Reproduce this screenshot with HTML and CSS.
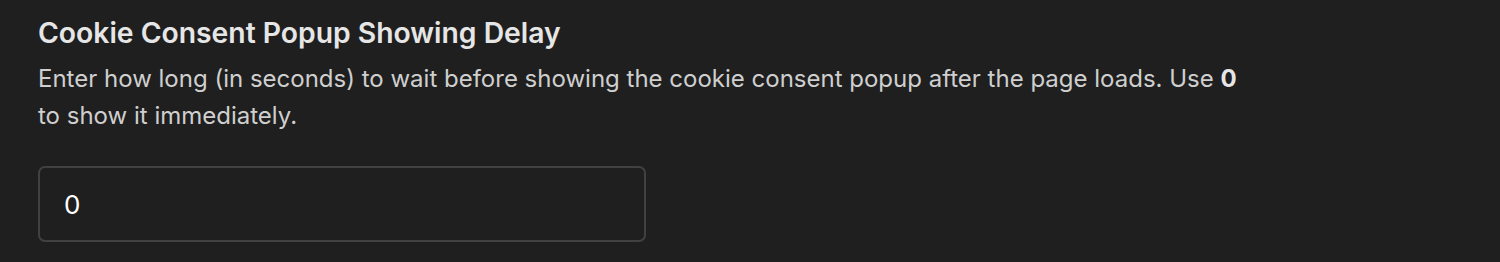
FILE: index.html
```html
<!DOCTYPE html>
<html lang="en">
<head>
    <meta charset="UTF-8">
    <meta name="viewport" content="width=device-width, initial-scale=1.0">
    <title>Cookie Consent Settings</title>
    <link rel="stylesheet" href="styles.css">
</head>
<body>
    <div class="field">
        <h2 class="field-title">Cookie Consent Popup Showing Delay</h2>
        <p class="field-desc">Enter how long (in seconds) to wait before showing the cookie consent popup after the page loads. Use <strong>0</strong> to show it immediately.</p>
        <input type="text" class="field-input" value="0">
    </div>
</body>
</html>
```

FILE: styles.css
```css
body {
    margin: 0;
    background-color: #1f1f1f;
    font-family: Inter, "Noto Sans", sans-serif;
}

.field {
    padding: 14px 38px;
    max-width: 1212px;
}

.field-title {
    margin: 0;
    font-size: 28.3px;
    font-weight: 600;
    line-height: 38px;
    color: #e6e6e6;
}

.field-desc {
    margin: 8px 0 0 0;
    font-size: 24px;
    line-height: 37px;
    color: #cfcfcf;
}

.field-desc strong {
    color: #e6e6e6;
    font-weight: 700;
}

.field-input {
    display: block;
    box-sizing: border-box;
    margin-top: 32px;
    width: 608px;
    height: 76px;
    padding: 0 24px;
    background-color: #1f1f1f;
    border: 2px solid #414141;
    border-radius: 7px;
    color: #ffffff;
    font-family: Inter, "Noto Sans", sans-serif;
    font-size: 26px;
    outline: none;
}
```
